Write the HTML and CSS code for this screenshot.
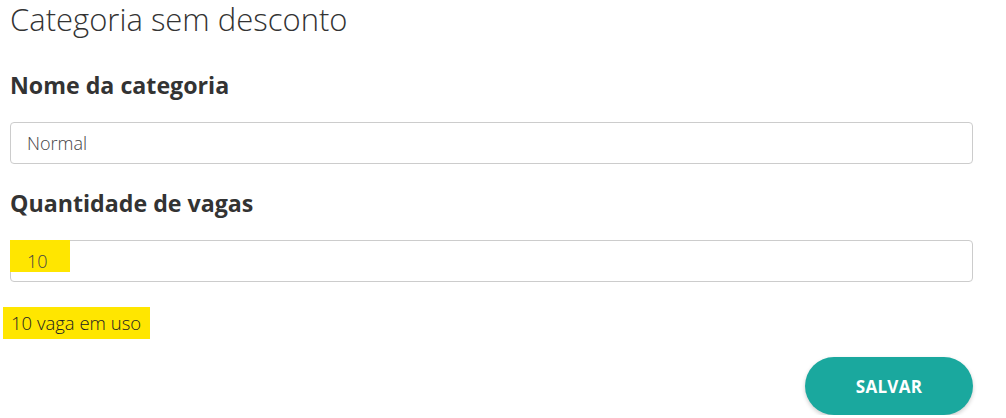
FILE: index.html
```html
<!DOCTYPE html>
<html lang="pt">
<head>
<meta charset="utf-8">
<title>Categoria sem desconto</title>
<link rel="stylesheet" href="styles.css">
</head>
<body>
<div class="page">
  <h1 class="title">Categoria sem desconto</h1>
  <div class="field">
    <label class="label">Nome da categoria</label>
    <div class="input"><span class="value">Normal</span></div>
  </div>
  <div class="field">
    <label class="label">Quantidade de vagas</label>
    <div class="input"><span class="hl-box"></span><span class="value">10</span></div>
  </div>
  <p class="usage"><span class="hl">10 vaga em uso</span></p>
  <div class="actions">
    <button class="btn">SALVAR</button>
  </div>
</div>
</body>
</html>
```
FILE: styles.css
```css
html, body {
  margin: 0;
  padding: 0;
  background: #fff;
}
body {
  font-family: "Open Sans", "Liberation Sans", sans-serif;
  color: #333;
  overflow: hidden;
}
.page {
  padding: 1px 33px 0 10px;
}
.title {
  margin: 0;
  font-size: 31px;
  font-weight: 300;
  line-height: 36px;
  color: #333;
}
.field {
  display: flex;
  flex-direction: column;
  margin-top: 33px;
}
.field + .field {
  margin-top: 24px;
}
.label {
  font-size: 23.2px;
  font-weight: 700;
  line-height: 30px;
  color: #333;
}
.input {
  position: relative;
  margin-top: 22px;
  height: 40px;
  border: 1px solid #ccc;
  border-radius: 4px;
  padding-left: 16px;
  font-size: 18px;
  font-weight: 300;
  line-height: 40px;
  color: #444;
  background: #fff;
}
.value {
  position: relative;
  z-index: 1;
}
.hl-box {
  position: absolute;
  z-index: 0;
  left: -1px;
  top: -1px;
  width: 60px;
  height: 32px;
  background: #ffe600;
}
.usage {
  margin: 25px 0 0 0;
  font-size: 18.5px;
  font-weight: 300;
  line-height: 32px;
}
.hl {
  display: inline-block;
  margin-left: -7px;
  padding: 0 9px 0 8px;
  background: #ffe600;
  color: #222;
}
.actions {
  display: flex;
  justify-content: flex-end;
  margin-top: 18px;
}
.btn {
  width: 168px;
  height: 58px;
  border: none;
  border-radius: 29px;
  background: #1aa89e;
  color: #fff;
  font-family: "Open Sans", "Liberation Sans", sans-serif;
  font-size: 17px;
  font-weight: 700;
  letter-spacing: 0.3px;
  box-shadow: 0 2px 4px rgba(0,0,0,0.2);
}
```
